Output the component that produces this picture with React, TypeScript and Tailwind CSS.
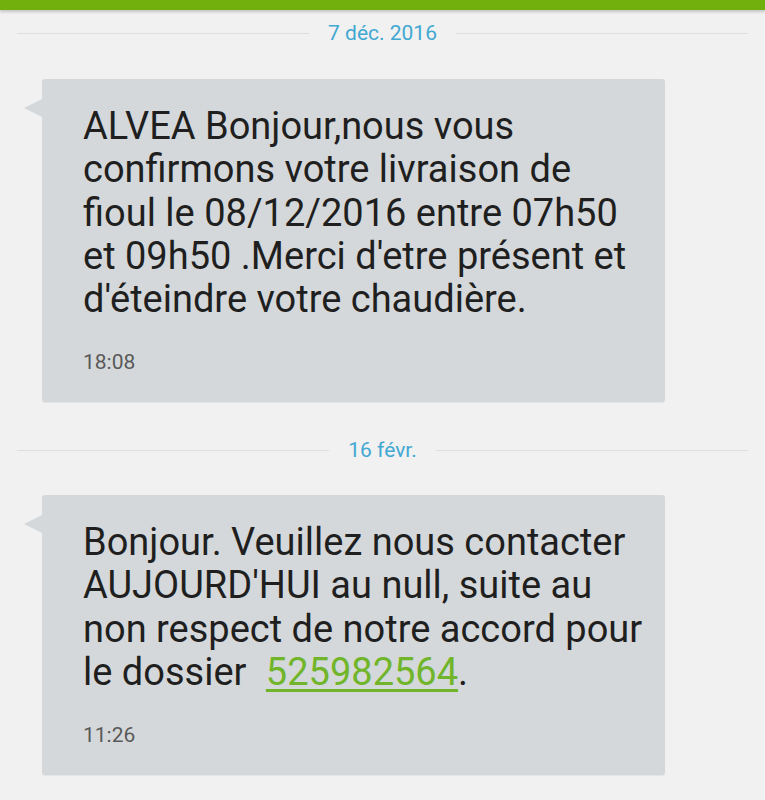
import React from "react";

function DateRow({ label, className }: { label: string; className?: string }) {
  return (
    <div className={"flex h-[46px] items-center gap-[19px] px-[17px] " + (className ?? "")}>
      <div className="h-px flex-1 bg-[#dedede]" />
      <div className="text-[21px] leading-none text-[#41a8d2]">{label}</div>
      <div className="h-px flex-1 bg-[#dedede]" />
    </div>
  );
}

function Bubble({ children, time, className }: { children: React.ReactNode; time: string; className?: string }) {
  return (
    <div className={"relative ml-[42px] w-[623px] rounded-[3px] bg-[#d5d8da] pb-[27px] pl-[41px] pr-[10px] pt-[26px] shadow-[0_1px_1px_rgba(0,0,0,0.06)] " + (className ?? "")}>
      <div className="absolute left-[-18px] top-[20px] h-0 w-0 border-y-[9px] border-r-[18px] border-y-transparent border-r-[#d5d8da]" />
      <div className="whitespace-nowrap text-[38px] leading-[43.3px] text-[#1f1f1f]">{children}</div>
      <div className="mt-[29px] text-[21px] leading-[24.6px] text-[#595959]">{time}</div>
    </div>
  );
}

export default function App() {
  return (
    <div className="min-h-[800px] w-[765px] bg-[#f1f1f1]" style={{ fontFamily: "Roboto, 'Noto Sans', sans-serif" }}>
      <div className="h-[10px] bg-[#72b00e] shadow-[0_2px_3px_rgba(0,0,0,0.18)]" />
      <DateRow label="7 déc. 2016" />
      <Bubble time="18:08" className="mt-[23px]">
        ALVEA Bonjour,nous vous
        <br />
        confirmons votre livraison de
        <br />
        fioul le 08/12/2016 entre 07h50
        <br />
        et 09h50 .Merci d'etre présent et
        <br />
        d'éteindre votre chaudière.
      </Bubble>
      <DateRow label="16 févr." className="mt-[25px]" />
      <Bubble time="11:26" className="mt-[22px]">
        Bonjour. Veuillez nous contacter
        <br />
        AUJOURD'HUI au null, suite au
        <br />
        non respect de notre accord pour
        <br />
        le dossier{" "}
        <span className="ml-[10px] text-[#70b52a] underline decoration-[2.5px] underline-offset-[4px]">525982564</span>.
      </Bubble>
    </div>
  );
}
